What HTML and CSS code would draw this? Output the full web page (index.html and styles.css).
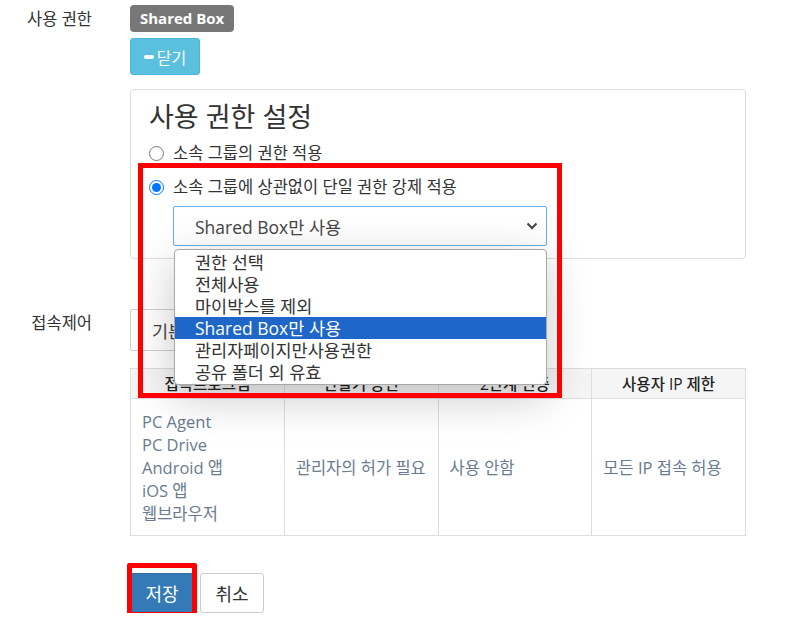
FILE: index.html
```html
<!DOCTYPE html>
<html lang="ko">
<head>
    <meta charset="UTF-8">
    <title>사용자 설정</title>
    <link rel="stylesheet" href="styles.css">
</head>
<body>

    <div class="form-page">

        <!-- 사용 권한 -->
        <div class="form-row">
            <label class="row-label">사용 권한</label>
            <div class="row-control">
                <span class="badge">Shared Box</span>
                <div>
                    <button class="btn btn-info btn-close">
                        <span class="icon-minus"></span>닫기
                    </button>
                </div>

                <div class="panel">
                    <h3 class="panel-title">사용 권한 설정</h3>
                    <label class="radio-row">
                        <input type="radio" name="perm"> 소속 그룹의 권한 적용
                    </label>
                    <label class="radio-row">
                        <input type="radio" name="perm" checked> 소속 그룹에 상관없이 단일 권한 강제 적용
                    </label>

                    <div class="select-wrap">
                        <div class="select-box focused">
                            <span>Shared Box만 사용</span>
                            <svg class="chevron" width="12" height="8" viewBox="0 0 12 8">
                                <path d="M1.5 1.5 L6 6 L10.5 1.5" fill="none" stroke="#444" stroke-width="2"/>
                            </svg>
                        </div>
                        <ul class="option-list">
                            <li>권한 선택</li>
                            <li>전체사용</li>
                            <li>마이박스를 제외</li>
                            <li class="selected">Shared Box만 사용</li>
                            <li>관리자페이지만사용권한</li>
                            <li>공유 폴더 외 유효</li>
                        </ul>
                    </div>

                    <div class="mark mark-perm"></div>
                </div>
            </div>
        </div>

        <!-- 접속제어 -->
        <div class="form-row row-access">
            <label class="row-label">접속제어</label>
            <div class="row-control">
                <div class="select-box small-select">
                    <span>기본 접속 정책</span>
                </div>

                <table class="access-table">
                    <thead>
                        <tr>
                            <th>접속프로그램</th>
                            <th>단말기 승인</th>
                            <th>2단계 인증</th>
                            <th>사용자 IP 제한</th>
                        </tr>
                    </thead>
                    <tbody>
                        <tr>
                            <td class="program-list">
                                PC Agent<br>
                                PC Drive<br>
                                Android 앱<br>
                                iOS 앱<br>
                                웹브라우저
                            </td>
                            <td>관리자의 허가 필요</td>
                            <td>사용 안함</td>
                            <td>모든 IP 접속 허용</td>
                        </tr>
                    </tbody>
                </table>
            </div>
        </div>

        <!-- Buttons -->
        <div class="form-actions">
            <span class="save-wrap">
                <button class="btn btn-primary">저장</button>
                <span class="mark mark-save"></span>
            </span>
            <button class="btn btn-default">취소</button>
        </div>

    </div>

</body>
</html>
```

FILE: styles.css
```css
* { margin: 0; padding: 0; box-sizing: border-box; }
body {
    font-family: "Open Sans", "Noto Sans CJK KR", sans-serif;
    font-size: 16px; color: #333; background: #fff;
}

.form-page { padding-top: 5px; width: 746px; }

/* Form Rows */
.form-row { display: flex; gap: 38px; }
.row-label { width: 92px; flex: none; text-align: right; font-size: 16.5px; line-height: 22px; padding-top: 3px; }
.row-control { flex: 1; }
.row-access { margin-top: 50px; }

/* Badge + Toggle */
.badge {
    display: inline-block; height: 27px; line-height: 27px; padding: 0 10px;
    background: #777; color: #fff; font-weight: bold; font-size: 15px; border-radius: 4px;
}
.btn {
    display: inline-flex; align-items: center; justify-content: center;
    font-family: inherit; border: 1px solid transparent; border-radius: 3px; cursor: pointer;
}
.btn-info { background: #5bc0de; border-color: #46b8da; color: #fff; }
.btn-close { margin-top: 6px; height: 37px; width: 70px; font-size: 16px; }
.icon-minus { display: inline-block; width: 10px; height: 4px; background: #fff; border-radius: 2px; margin-right: 3px; }

/* Permission Panel */
.panel {
    position: relative; margin-top: 14px; border: 1px solid #ddd; border-radius: 4px;
    padding: 10px 18px 12px;
}
.panel-title { font-size: 27px; font-weight: normal; line-height: 34px; color: #333; margin-bottom: 8px; }
.radio-row { display: flex; align-items: center; height: 22px; line-height: 22px; font-size: 16.5px; }
.radio-row + .radio-row { margin-top: 12px; }
.radio-row input { width: 15px; height: 15px; margin: 0 9px 0 0; }

.select-wrap { position: relative; margin: 8px 0 0 24px; width: 374px; }
.select-box {
    display: flex; align-items: center; justify-content: space-between;
    height: 40px; padding: 0 8px 0 21px; font-size: 17.5px; color: #444;
    border: 1px solid #ccc; border-radius: 2px; background: #fff;
}
.select-box.focused { border-color: #66afe9; }

/* Open dropdown */
.option-list {
    position: absolute; left: 1px; top: 43px; width: 373px; z-index: 5;
    list-style: none; background: #fff; border: 1px solid #a8a8a8; border-radius: 4px;
    padding: 1px 0; box-shadow: 0 12px 45px rgba(0, 0, 0, 0.22);
}
.option-list li { height: 22px; line-height: 22px; padding-left: 20px; font-size: 17.5px; color: #333; }
.option-list li.selected { background: #1f66c9; color: #fff; }

/* Annotation frames */
.mark { position: absolute; border: 5px solid #f00; z-index: 10; pointer-events: none; }
.mark-perm { left: 7px; top: 73px; width: 424px; height: 235px; }
.mark-save { left: -3px; top: -10px; right: -3px; bottom: -4px; border-radius: 2px; }

/* Access control */
.small-select { width: 260px; height: 42px; }
.access-table {
    width: 616px; margin-top: 17px; border-collapse: collapse; table-layout: fixed;
}
.access-table th, .access-table td { border: 1px solid #ddd; }
.access-table th {
    height: 30px; background: #f5f5f5; font-size: 15.5px; font-weight: 500; color: #222; text-align: center;
}
.access-table td {
    height: 137px; padding: 0 11px; font-size: 16.5px; line-height: 23px; color: #6a7b8e;
    vertical-align: middle;
}

/* Buttons */
.form-actions { display: flex; gap: 6px; margin: 37px 0 0 130px; }
.save-wrap { position: relative; display: inline-flex; }
.form-actions .btn { height: 40px; width: 64px; font-size: 18px; }
.btn-primary { background: #337ab7; border-color: #2e6da4; color: #fff; }
.btn-default { background: #fff; border-color: #ccc; color: #333; }
```
